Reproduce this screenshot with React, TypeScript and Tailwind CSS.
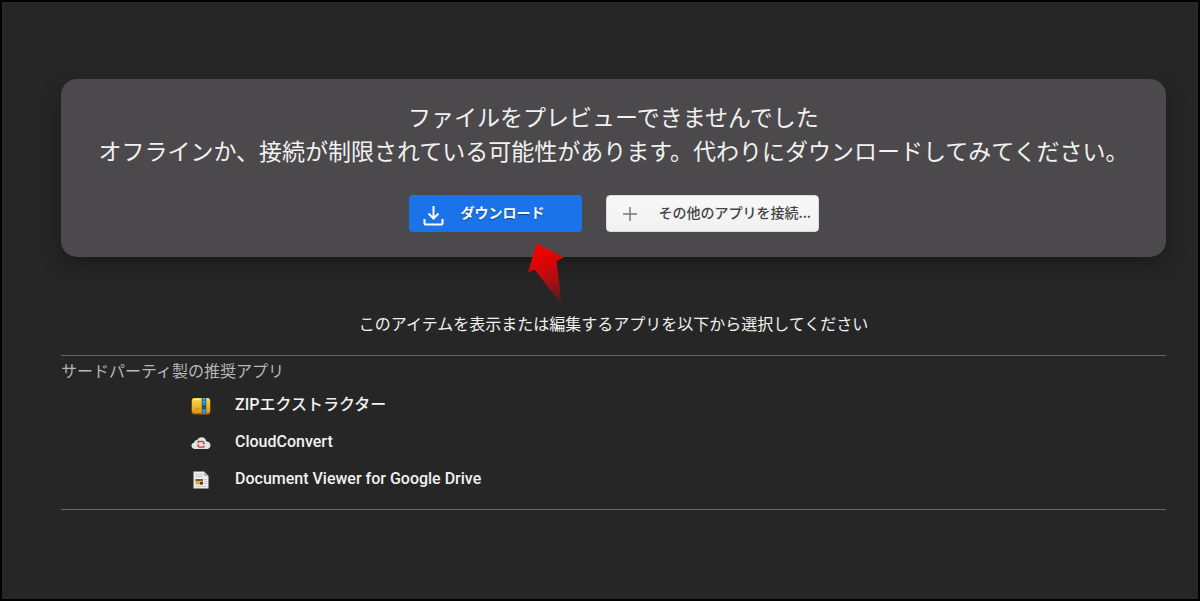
import type { ReactNode } from "react";

function ZipIcon() {
  return (
    <svg width="20" height="18" viewBox="0 0 20 18" aria-hidden="true">
      <defs>
        <linearGradient id="zip" x1="0" y1="0" x2="0" y2="1">
          <stop offset="0" stopColor="#fbdc5c" />
          <stop offset="1" stopColor="#dd9a12" />
        </linearGradient>
      </defs>
      <rect x="0.5" y="1" width="19" height="16.5" rx="3" fill="#9a6a10" />
      <rect x="1" y="1" width="18" height="15" rx="2.5" fill="url(#zip)" />
      <path d="M2 2.5h8" stroke="#fff0a0" />
      <path d="M3.5 13.500h4M4.500 11.500h4" stroke="#cf9620" />
      <rect x="11" y="1" width="4" height="16" fill="#147fbd" />
      <path d="M13 1v16" stroke="#31b9f0" strokeWidth="1.5" strokeDasharray="2 1" />
      <rect x="11" y="8" width="4" height="4" fill="#27506d" />
      <path d="M10.5 2v14M15.5 2v14" stroke="#b67a12" strokeWidth="0.6" />
    </svg>
  );
}

function CloudIcon() {
  return (
    <svg width="20" height="18" viewBox="0 0 20 18" aria-hidden="true">
      <path
        d="M4 15C1.900 15 0.500 13.700 0.500 11.800c0-1.700 1.200-2.900 2.700-3.200C3.300 6.900 4.500 5.800 6.300 5.900 7.200 4.200 8.600 3.200 10.500 3.200c2.500 0 4.300 1.600 4.700 4 2.500.2 4.300 1.800 4.300 4 0 2.300-1.500 3.800-4 3.800z"
        fill="#e4e4e6"
      />
      <path
        d="M7.200 9.200V7.500h4.300q1.300 0 1.300 1.300v.7M12.800 11.500v1.700H8.500q-1.300 0-1.300-1.300v-.7"
        fill="none"
        stroke="#d23a3c"
        strokeWidth="1.300"
      />
      <path d="M11.300 9h3l-1.500 1.600zM5.700 11.600h3l-1.500-1.600z" fill="#d23a3c" />
    </svg>
  );
}

function DocumentIcon() {
  return (
    <svg width="20" height="18" viewBox="0 0 20 18" aria-hidden="true">
      <path d="M2.500 0.500h10.500l4.500 4.500v12.500h-15z" fill="#ececec" />
      <path d="M13 0.500v4.500h4.500z" fill="#b5b5b5" />
      <path d="M4.500 3.500h7M4.500 5.500h7M13 8.500h3M13 10.500h3M13 12.500h3M4.500 15.500h11" stroke="#c4c8ce" />
      <rect x="4.500" y="8" width="7.500" height="5.500" fill="#e6a63a" />
      <path d="M4.500 8h7.500v2h-7.500z" fill="#80602d" />
      <path d="M9 13.500v-2.500h3v2.500z" fill="#4b3b24" />
    </svg>
  );
}

function Pointer() {
  return (
    <svg
      className="absolute top-[48px] left-[118px] pointer-events-none"
      width="38"
      height="64"
      viewBox="0 0 38 64"
      aria-hidden="true"
    >
      <defs>
        <linearGradient id="pointer" x1="12" y1="0" x2="32" y2="62" gradientUnits="userSpaceOnUse">
          <stop offset="0" stopColor="#fb0000" />
          <stop offset="0.3" stopColor="#dc0404" />
          <stop offset="0.65" stopColor="#a41012" />
          <stop offset="1" stopColor="#a41012" stopOpacity="0.1" />
        </linearGradient>
      </defs>
      <path d="M9.500 0.500L37 14.500L29.500 18L35 62L7.500 26.500L1 29.500z" fill="url(#pointer)" />
    </svg>
  );
}

const APPS: { name: string; icon: ReactNode }[] = [
  { name: "ZIPエクストラクター", icon: <ZipIcon /> },
  { name: "CloudConvert", icon: <CloudIcon /> },
  { name: "Document Viewer for Google Drive", icon: <DocumentIcon /> },
];

export default function App() {
  return (
    <div className="min-h-screen border-2 border-black bg-[#262626] pt-[77px] pr-8 pl-[59px] font-['Noto_Sans_CJK_JP',sans-serif] text-[#f1f1f1]">
      {/* Message card */}
      <section className="flex flex-col items-center rounded-2xl bg-[#4c494c] pt-5 pb-[25px] shadow-[0_8px_20px_rgba(0,0,0,0.3)]">
        <p className="text-center text-[23px] leading-[34px]">
          ファイルをプレビューできませんでした
          <br />
          オフラインか、接続が制限されている可能性があります。代わりにダウンロードしてみてください。
        </p>
        <div className="mt-7 flex gap-6">
          <div className="relative">
            <button className="flex h-[37px] w-[173px] items-center rounded-sm bg-[#1a73e8] pb-1 pl-[14px] text-sm font-bold text-white [text-shadow:0_1px_1px_rgba(0,0,0,0.4)]">
              <svg className="mt-2" width="21" height="21" viewBox="0 0 21 21" fill="none" stroke="#fff" strokeWidth="2" aria-hidden="true">
                <path d="M10.500 1v12.500M5.500 8.500l5 5 5-5M1.500 14v4.500q0 1 1 1h16q1 0 1-1V14" />
              </svg>
              <span className="ml-[17px]">ダウンロード</span>
            </button>
            <Pointer />
          </div>
          <button className="flex h-[37px] w-[213px] items-center rounded-sm border border-[#dcdcdc] bg-linear-to-b from-[#f8f8f8] to-[#f1f1f1] pb-1 pl-4 text-sm font-medium whitespace-nowrap text-[#444]">
            <svg className="mt-1" width="14" height="14" viewBox="0 0 14 14" stroke="#777" strokeWidth="1.500" aria-hidden="true">
              <path d="M7 0v14M0 7h14" />
            </svg>
            <span className="ml-[22px]">その他のアプリを接続...</span>
          </button>
        </div>
      </section>

      {/* App list */}
      <p className="mt-[54px] text-center text-base leading-6">
        このアイテムを表示または編集するアプリを以下から選択してください
      </p>
      <section className="mt-5 border-y border-[#666] pt-[2px] pb-3">
        <h2 className="text-base leading-6 text-[#b8b8b8]">サードパーティ製の推奨アプリ</h2>
        <ul className="pt-1">
          {APPS.map((app) => (
            <li key={app.name}>
              <a href="#" className="flex h-[37px] items-center pl-[130px] font-['Roboto','Noto_Sans_CJK_JP',sans-serif] text-base font-medium">
                <span className="mt-[3px]">{app.icon}</span>
                <span className="ml-6">{app.name}</span>
              </a>
            </li>
          ))}
        </ul>
      </section>
    </div>
  );
}
